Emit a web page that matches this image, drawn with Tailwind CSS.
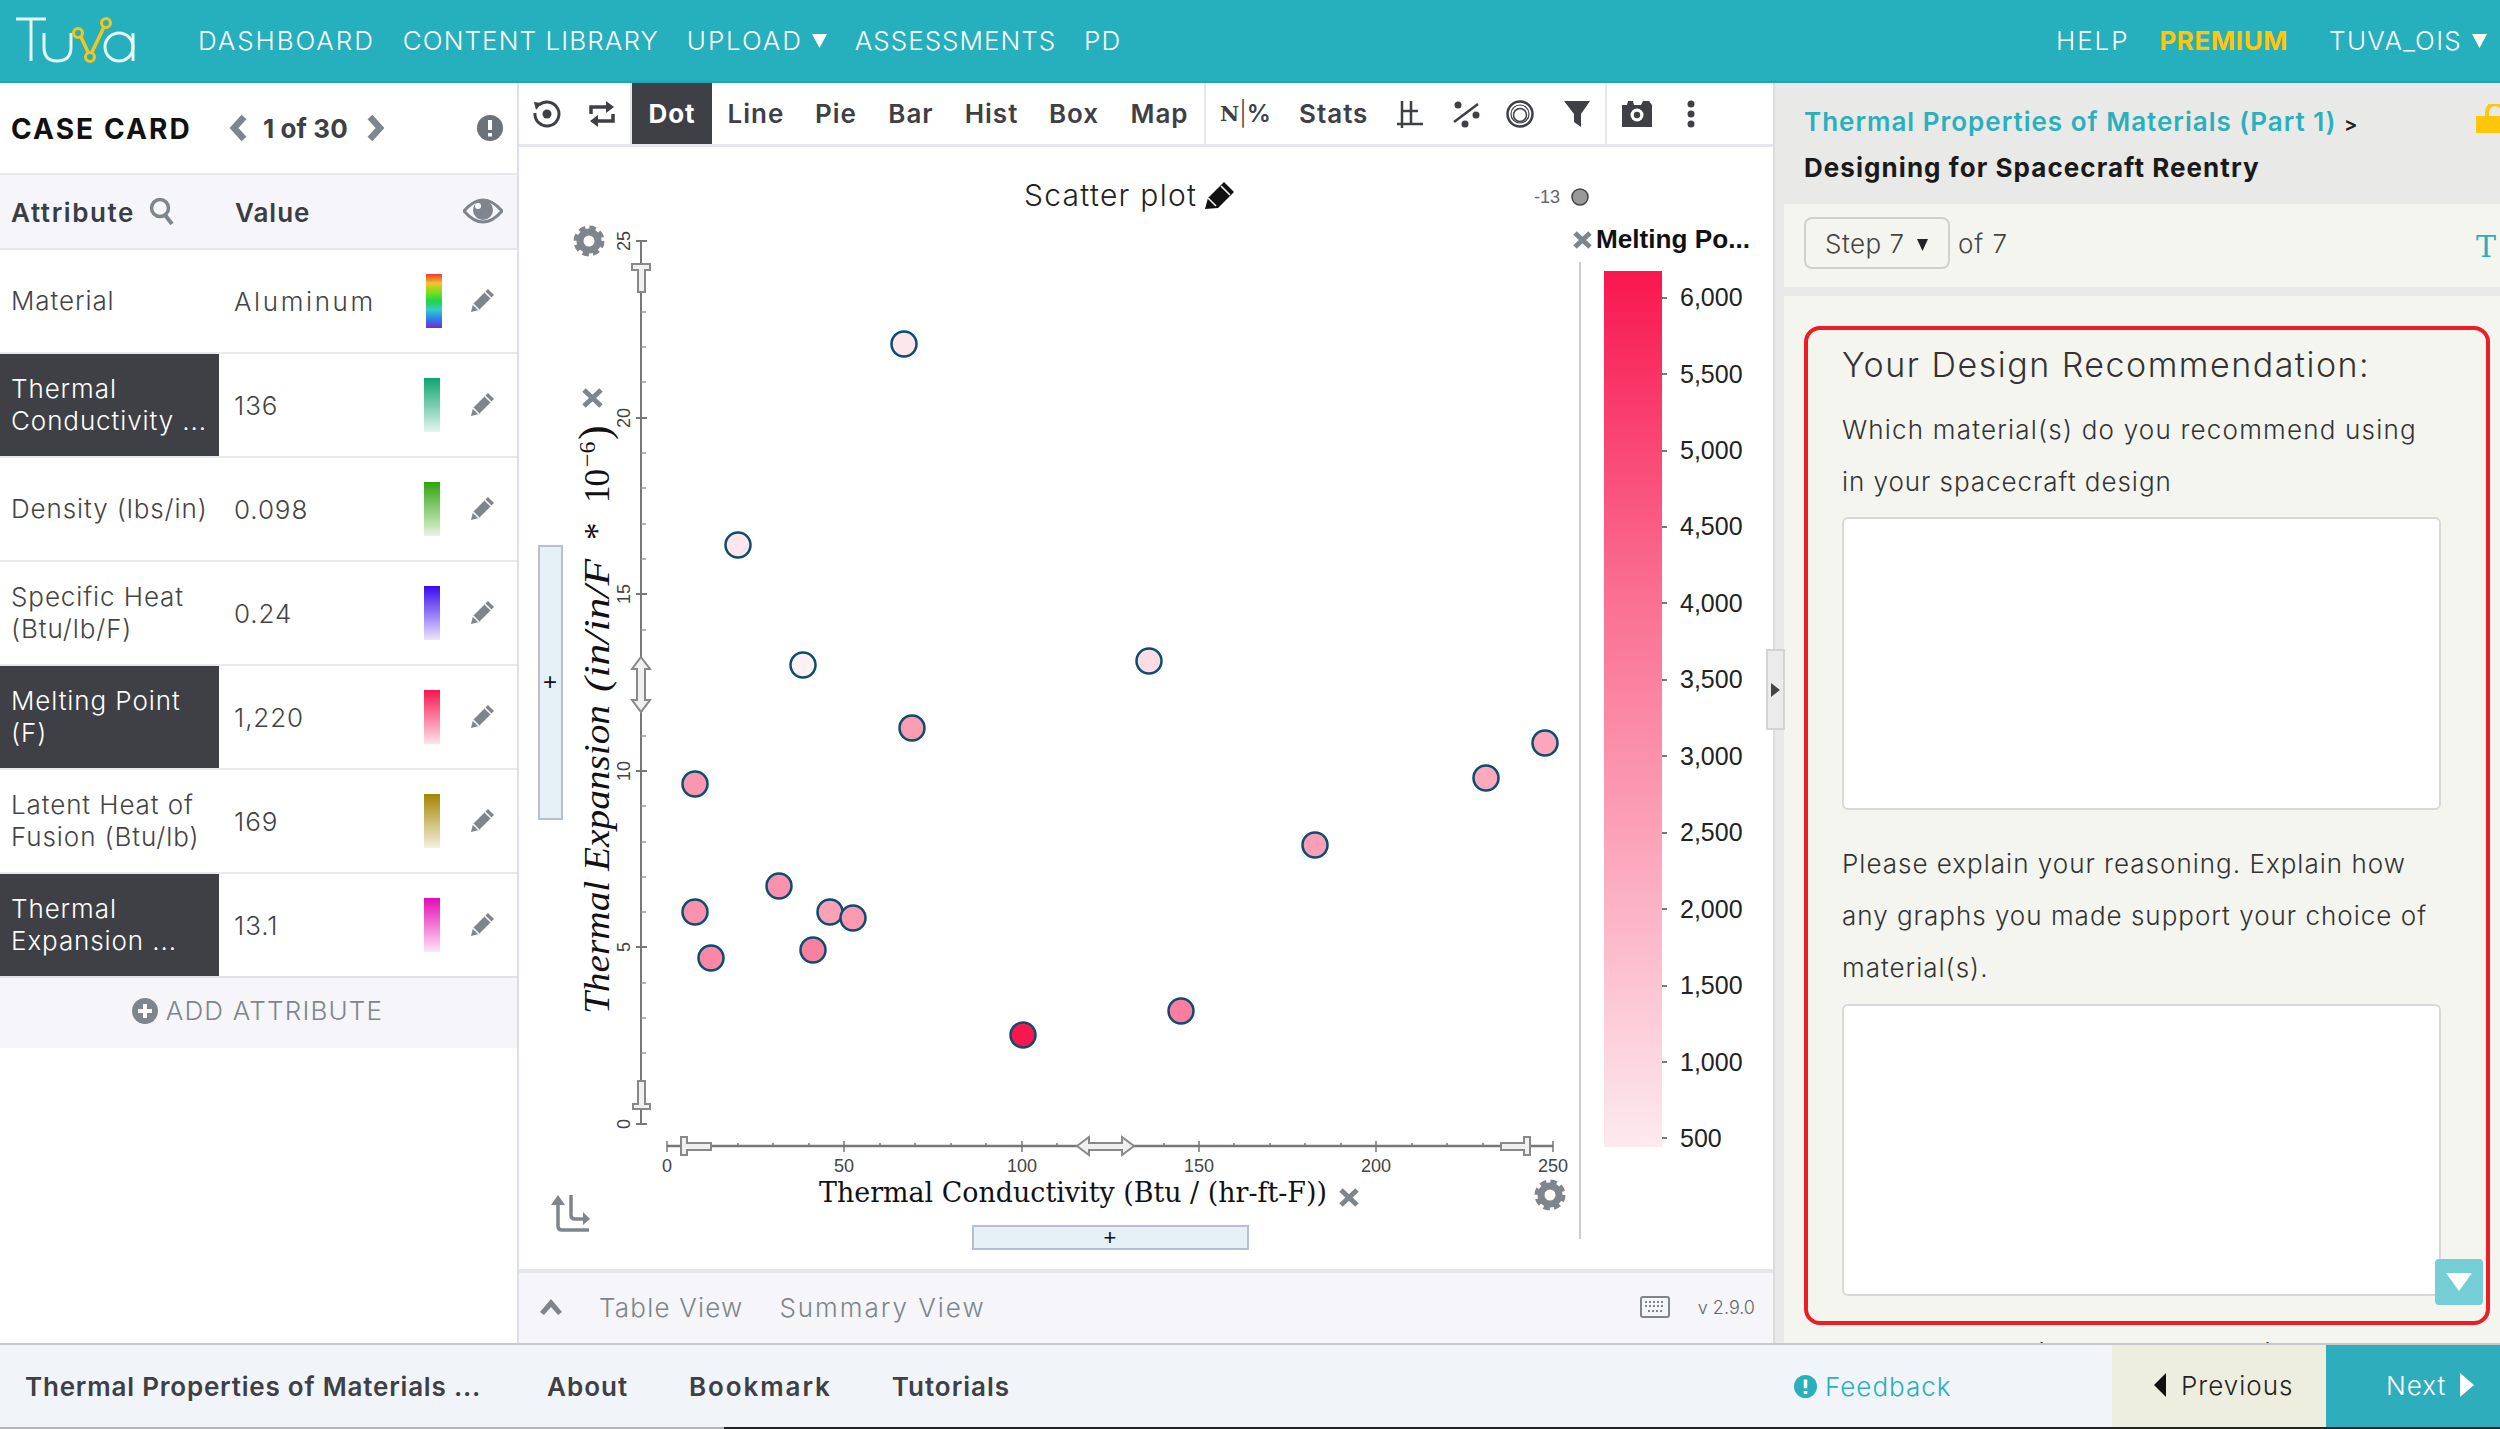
<!doctype html>
<html><head><meta charset="utf-8"><script src="https://cdn.jsdelivr.net/npm/@tailwindcss/browser@4"></script></head>
<body class="m-0 overflow-hidden bg-white">
<div class="relative flex flex-col w-[2500px] h-[1429px] overflow-hidden font-['Inter',sans-serif] font-light text-[#444] text-[26px]">
<!-- top bar -->
<header class="flex items-center h-[83px] shrink-0 bg-[#26afbd] border-b-2 border-[#1fa6b4] text-white text-[26px]">
  <svg width="140" height="81" viewBox="0 0 140 81" class="shrink-0" fill="none"><path d="M16 19H46M31 19V61" stroke="#e6f7f8" stroke-width="3"/><path d="M44 33V47Q44 61 57 61Q71 61 71 47V33" stroke="#e6f7f8" stroke-width="3"/><ellipse cx="119" cy="47" rx="14" ry="14" stroke="#e6f7f8" stroke-width="3"/><path d="M133 33V61" stroke="#e6f7f8" stroke-width="3"/><path d="M81 37L88 52M92 52L104 27" stroke="#f6c51b" stroke-width="3.5"/><circle cx="78" cy="33" r="4.5" stroke="#f6c51b" stroke-width="3"/><circle cx="90" cy="57" r="4.5" stroke="#f6c51b" stroke-width="3"/><circle cx="106" cy="23" r="4.5" stroke="#f6c51b" stroke-width="3"/></svg>
  <nav class="flex items-center ml-[58px] gap-[28px] tracking-[1.1px] whitespace-nowrap">
    <span class="tracking-[1.9px]">DASHBOARD</span><span>CONTENT LIBRARY</span><span class="flex items-center gap-[9px] tracking-[1.9px]">UPLOAD<svg width="15" height="14" viewBox="0 0 15 14"><path d="M0 0H15L7.5 14Z" fill="#fff"/></svg></span><span class="tracking-[1px]">ASSESSMENTS</span><span>PD</span>
  </nav>
  <div class="ml-auto flex items-center mr-[13px] tracking-[1.9px] whitespace-nowrap">
    <span>HELP</span><span class="ml-[30px] font-bold tracking-[0.6px] text-[#ffc60b]">PREMIUM</span><span class="ml-[41px] flex items-center gap-[10px] tracking-[1.3px]">TUVA_OIS<svg width="15" height="14" viewBox="0 0 15 14"><path d="M0 0H15L7.5 14Z" fill="#fff"/></svg></span>
  </div>
</header>
<div class="flex flex-1 min-h-0">
  <!-- left -->
  <aside class="w-[519px] shrink-0 border-r-2 border-[#dcdfe6] flex flex-col tracking-[0.9px]">
    <div class="flex items-center h-[92px] border-b-2 border-[#e6e7ec] pl-[11px] pr-[14px] tracking-normal">
      <span class="text-[28px] font-bold text-[#111] tracking-[2.1px] w-[217px] shrink-0 pt-[2px]">CASE CARD</span>
      <svg width="20" height="28" viewBox="0 0 20 28"><path d="M16 3L6 14L16 25" fill="none" stroke="#7f858c" stroke-width="6.5"/></svg>
      <span class="ml-[15px] text-[26px] font-bold text-[#3e4045] tracking-[0.1px] whitespace-nowrap">1 of 30</span>
      <svg width="20" height="28" viewBox="0 0 20 28" class="ml-[18px]"><path d="M4 3L14 14L4 25" fill="none" stroke="#7f858c" stroke-width="6.5"/></svg>
      <svg width="26" height="26" viewBox="0 0 26 26" class="ml-auto"><circle cx="13" cy="13" r="13" fill="#6c7279"/><path d="M13 5V15M13 18V21.5" stroke="#fff" stroke-width="4"/></svg>
    </div>
    <div class="flex items-center h-[75px] bg-[#f5f5fa] border-b-2 border-[#e6e7ec] pl-[11px] pr-[14px] text-[26px] font-semibold text-[#3a3d42] tracking-[1px]">
      <span class="w-[224px] shrink-0 flex items-center gap-[14px] pt-[2px] tracking-[1.6px]">Attribute<svg width="26" height="28" viewBox="0 0 26 28" class="-mt-[4px]"><circle cx="11" cy="11" r="8.5" fill="none" stroke="#7f858c" stroke-width="3.5"/><path d="M16 18L23 27" stroke="#7f858c" stroke-width="4"/></svg></span>
      <span class="pt-[2px]">Value</span>
      <svg width="40" height="28" viewBox="0 0 40 28" class="ml-auto -mt-[2px]"><path d="M1 14Q20 -8 39 14Q20 36 1 14Z" fill="none" stroke="#7f858c" stroke-width="3"/><circle cx="20" cy="13" r="10" fill="#7f858c"/><circle cx="15" cy="9" r="3" fill="#fff"/></svg>
    </div>
    <div class="flex items-center h-[104px] border-b-2 border-[#eaeaee]"><div class="w-[219px] h-full flex items-center pl-[11px] leading-[32px]">Material</div><div class="pl-[15px] flex-1 tracking-[2.6px]">Aluminum</div><div class="w-[16px] h-[54px] mr-[28px] bg-[linear-gradient(to_bottom,#f0392e,#f5c02a,#7ce01f,#1fd44a,#39c9c9,#2a7ff0,#7a28d0)]"></div><svg width="26" height="26" viewBox="0 0 26 26" class="mr-[21px] -mt-[3px]"><path d="M1 25L3 17L18 2L24 8L9 23Z" fill="#7f858c"/><path d="M3 17L9 23M15 5L21 11" stroke="#fff" stroke-width="1.5"/></svg></div>
    <div class="flex items-center h-[104px] border-b-2 border-[#eaeaee]"><div class="w-[219px] h-full flex items-center pl-[11px] leading-[32px] bg-[#3e4045] text-white whitespace-nowrap"><span>Thermal<br>Conductivity ...</span></div><div class="pl-[15px] flex-1">136</div><div class="w-[16px] h-[54px] mr-[30px] bg-[linear-gradient(to_bottom,#0aa56f,#e4f6ef)]"></div><svg width="26" height="26" viewBox="0 0 26 26" class="mr-[21px] -mt-[3px]"><path d="M1 25L3 17L18 2L24 8L9 23Z" fill="#7f858c"/><path d="M3 17L9 23M15 5L21 11" stroke="#fff" stroke-width="1.5"/></svg></div>
    <div class="flex items-center h-[104px] border-b-2 border-[#eaeaee]"><div class="w-[219px] h-full flex items-center pl-[11px] leading-[32px] whitespace-nowrap">Density (lbs/in)</div><div class="pl-[15px] flex-1">0.098</div><div class="w-[16px] h-[54px] mr-[30px] bg-[linear-gradient(to_bottom,#2ea50a,#e6f5e0)]"></div><svg width="26" height="26" viewBox="0 0 26 26" class="mr-[21px] -mt-[3px]"><path d="M1 25L3 17L18 2L24 8L9 23Z" fill="#7f858c"/><path d="M3 17L9 23M15 5L21 11" stroke="#fff" stroke-width="1.5"/></svg></div>
    <div class="flex items-center h-[104px] border-b-2 border-[#eaeaee]"><div class="w-[219px] h-full flex items-center pl-[11px] leading-[32px] whitespace-nowrap"><span>Specific Heat<br>(Btu/lb/F)</span></div><div class="pl-[15px] flex-1">0.24</div><div class="w-[16px] h-[54px] mr-[30px] bg-[linear-gradient(to_bottom,#3a0af0,#ebe5fd)]"></div><svg width="26" height="26" viewBox="0 0 26 26" class="mr-[21px] -mt-[3px]"><path d="M1 25L3 17L18 2L24 8L9 23Z" fill="#7f858c"/><path d="M3 17L9 23M15 5L21 11" stroke="#fff" stroke-width="1.5"/></svg></div>
    <div class="flex items-center h-[104px] border-b-2 border-[#eaeaee]"><div class="w-[219px] h-full flex items-center pl-[11px] leading-[32px] bg-[#3e4045] text-white whitespace-nowrap"><span>Melting Point<br>(F)</span></div><div class="pl-[15px] flex-1">1,220</div><div class="w-[16px] h-[54px] mr-[30px] bg-[linear-gradient(to_bottom,#f9164f,#fde3ea)]"></div><svg width="26" height="26" viewBox="0 0 26 26" class="mr-[21px] -mt-[3px]"><path d="M1 25L3 17L18 2L24 8L9 23Z" fill="#7f858c"/><path d="M3 17L9 23M15 5L21 11" stroke="#fff" stroke-width="1.5"/></svg></div>
    <div class="flex items-center h-[104px] border-b-2 border-[#eaeaee]"><div class="w-[219px] h-full flex items-center pl-[11px] leading-[32px] whitespace-nowrap"><span>Latent Heat of<br>Fusion (Btu/lb)</span></div><div class="pl-[15px] flex-1">169</div><div class="w-[16px] h-[54px] mr-[30px] bg-[linear-gradient(to_bottom,#a38600,#f5f1de)]"></div><svg width="26" height="26" viewBox="0 0 26 26" class="mr-[21px] -mt-[3px]"><path d="M1 25L3 17L18 2L24 8L9 23Z" fill="#7f858c"/><path d="M3 17L9 23M15 5L21 11" stroke="#fff" stroke-width="1.5"/></svg></div>
    <div class="flex items-center h-[104px] border-b-2 border-[#e2e4e9]"><div class="w-[219px] h-full flex items-center pl-[11px] leading-[32px] bg-[#3e4045] text-white whitespace-nowrap"><span>Thermal<br>Expansion ...</span></div><div class="pl-[15px] flex-1">13.1</div><div class="w-[16px] h-[54px] mr-[30px] bg-[linear-gradient(to_bottom,#e60ab4,#fde5f6)]"></div><svg width="26" height="26" viewBox="0 0 26 26" class="mr-[21px] -mt-[3px]"><path d="M1 25L3 17L18 2L24 8L9 23Z" fill="#7f858c"/><path d="M3 17L9 23M15 5L21 11" stroke="#fff" stroke-width="1.5"/></svg></div>
    <div class="flex items-center justify-center gap-[8px] h-[70px] bg-[#f5f5fa] text-[#7f858c] text-[26px] tracking-[1.2px] pb-[5px] pr-[2px]">
      <svg width="26" height="26" viewBox="0 0 26 26"><circle cx="13" cy="13" r="13" fill="#7f858c"/><path d="M13 6V20M6 13H20" stroke="#fff" stroke-width="4"/></svg><span>ADD ATTRIBUTE</span>
    </div>
  </aside>
  <!-- center -->
  <main class="w-[1254px] shrink-0 flex flex-col">
    <div class="flex items-stretch h-[64px] border-b-[3px] border-[#e6e7ec] text-[26px] font-semibold text-[#3e4045] tracking-[1px] shrink-0">
      <div class="flex items-center w-[113px] pl-[14px] gap-[28px] border-r-2 border-[#e6e7ec]">
        <svg width="28" height="28" viewBox="0 0 28 28" fill="none"><path d="M6 5A12 12 0 1 1 2 13" stroke="#3e4045" stroke-width="3"/><path d="M1 2L9 3L3 10Z" fill="#3e4045"/><circle cx="14" cy="14" r="4.5" fill="#3e4045"/></svg>
        <svg width="26" height="26" viewBox="0 0 26 26" fill="none"><path d="M2 13V6H19" stroke="#3e4045" stroke-width="3.5"/><path d="M17 0L25 6L17 12Z" fill="#3e4045"/><path d="M24 13V20H7" stroke="#3e4045" stroke-width="3.5"/><path d="M9 14L1 20L9 26Z" fill="#3e4045"/></svg>
      </div>
      <div class="flex items-center justify-center w-[80px] bg-[#3e4045] text-white font-bold">Dot</div>
      <span class="flex items-center justify-center w-[88px]">Line</span><span class="flex items-center justify-center w-[72px]">Pie</span><span class="flex items-center justify-center w-[78px]">Bar</span><span class="flex items-center justify-center w-[83px]">Hist</span><span class="flex items-center justify-center w-[82px]">Box</span><span class="flex items-center justify-center w-[89px]">Map</span>
      <div class="flex items-center w-[403px] pl-[14px] border-x-2 border-[#e6e7ec]">
        <span class="flex items-center w-[50px] justify-between tracking-normal"><span class="font-['DejaVu_Serif',serif] font-bold text-[21px]">N</span><span class="font-light text-[24px]">|</span><span class="text-[24px]">%</span></span>
        <span class="ml-[29px]">Stats</span>
        <svg width="28" height="30" viewBox="0 0 28 30" fill="none" stroke="#3e4045" stroke-width="2.5" class="ml-[28px]"><path d="M1 25H27M6 2V29M15 2V25M6 12H22"/></svg>
        <svg width="28" height="28" viewBox="0 0 28 28" fill="#3e4045" class="ml-[28px]"><path d="M2 22L26 4" stroke="#3e4045" stroke-width="2.5"/><circle cx="6" cy="5" r="3.5"/><circle cx="24" cy="15" r="3.5"/><circle cx="13" cy="24" r="3.5"/></svg>
        <svg width="28" height="28" viewBox="0 0 28 28" fill="none" stroke="#3e4045" class="ml-[26px]"><circle cx="14" cy="14" r="12.5" stroke-width="2.5"/><circle cx="14" cy="15" r="6.5" stroke-width="1.5"/><circle cx="14" cy="14" r="9" stroke-width="1.2"/></svg>
        <svg width="26" height="28" viewBox="0 0 26 28" fill="#3e4045" class="ml-[30px]"><path d="M0 1H26L17 14V27L10 22V14Z"/></svg>
      </div>
      <div class="flex items-center">
        <svg width="32" height="28" viewBox="0 0 32 28" class="ml-[14px]"><path d="M1 5H6L7 1H12L13 5H20L22 1H28L31 5V27H1Z" fill="#3e4045"/><circle cx="16" cy="15" r="6.5" fill="#fff"/><circle cx="16" cy="15" r="3.2" fill="#3e4045"/></svg>
        <svg width="8" height="28" viewBox="0 0 8 28" class="ml-[34px]" fill="#3e4045"><circle cx="4" cy="4" r="3.5"/><circle cx="4" cy="14" r="3.5"/><circle cx="4" cy="24" r="3.5"/></svg>
      </div>
    </div>
    <div class="relative flex-1 min-h-0">
      <svg class="absolute inset-0" width="1254" height="1122" viewBox="519 147 1254 1122" font-family="'Liberation Sans',sans-serif">
        <defs>
          <g id="gear"><circle r="12.5" fill="none" stroke="#7f858c" stroke-width="6" stroke-dasharray="6 3.82"/><circle r="9" fill="none" stroke="#7f858c" stroke-width="7"/></g>
          <linearGradient id="cb" x1="0" y1="0" x2="0" y2="1"><stop offset="0" stop-color="#f8174f"/><stop offset="0.37" stop-color="#fa6f92"/><stop offset="0.62" stop-color="#fb9db5"/><stop offset="1" stop-color="#fdeaef"/></linearGradient>
        </defs>
        <!-- title -->
        <text x="1024" y="206" font-family="Inter,sans-serif" font-weight="300" font-size="30" fill="#222" textLength="172" lengthAdjust="spacing">Scatter plot</text>
        <path d="M1205 209L1208 198L1224 182L1234 192L1218 208Z" fill="#111"/><path d="M1221 186L1230 195M1208 198L1216 206" stroke="#fff" stroke-width="1.5"/>
        <!-- legend -->
        <text x="1534" y="203" font-size="18" fill="#666">-13</text>
        <circle cx="1580" cy="197" r="8" fill="#999" stroke="#444" stroke-width="1.5"/>
        <path d="M1575 233L1590 247M1590 233L1575 247" stroke="#7f858c" stroke-width="5"/>
        <text x="1596" y="248" font-size="26" font-weight="700" fill="#111" textLength="154" lengthAdjust="spacingAndGlyphs">Melting Po...</text>
        <path d="M1580 262V1239" stroke="#ccc" stroke-width="2"/>
        <rect x="1604" y="271" width="58" height="876" fill="url(#cb)"/>
        <g font-size="25" fill="#222">
          <text x="1680" y="306">6,000</text><text x="1680" y="383">5,500</text><text x="1680" y="459">5,000</text><text x="1680" y="535">4,500</text><text x="1680" y="612">4,000</text><text x="1680" y="688">3,500</text><text x="1680" y="765">3,000</text><text x="1680" y="841">2,500</text><text x="1680" y="918">2,000</text><text x="1680" y="994">1,500</text><text x="1680" y="1071">1,000</text><text x="1680" y="1147">500</text>
        </g>
        <path d="M1662 298h5M1662 374h5M1662 451h5M1662 527h5M1662 603h5M1662 680h5M1662 756h5M1662 833h5M1662 909h5M1662 986h5M1662 1062h5M1662 1138h5" stroke="#777" stroke-width="2"/>
        <!-- y axis -->
        <path d="M641 241V1124" stroke="#777" stroke-width="2"/>
        <path d="M636 241H647M636 418H647M636 594H647M636 771H647M636 947H647M636 1124H647" stroke="#777" stroke-width="2"/>
        <path d="M641 276h5M641 312h5M641 347h5M641 382h5M641 453h5M641 488h5M641 524h5M641 559h5M641 630h5M641 665h5M641 700h5M641 736h5M641 806h5M641 842h5M641 877h5M641 912h5M641 983h5M641 1018h5M641 1053h5M641 1089h5" stroke="#999" stroke-width="1.5"/>
        <g font-size="18" fill="#444" text-anchor="middle">
          <text transform="translate(630,241) rotate(-90)">25</text><text transform="translate(630,418) rotate(-90)">20</text><text transform="translate(630,594) rotate(-90)">15</text><text transform="translate(630,771) rotate(-90)">10</text><text transform="translate(630,947) rotate(-90)">5</text><text transform="translate(630,1124) rotate(-90)">0</text>
        </g>
        <path d="M632 264H650V270H645V292H638V270H632Z" fill="#f0f0f0" stroke="#888" stroke-width="2"/>
        <path d="M641 657L650 669H645V700H650L641 712L632 700H637V669H632Z" fill="#f0f0f0" stroke="#888" stroke-width="2"/>
        <path d="M638 1081H645V1104H650V1109H633V1104H638Z" fill="#f0f0f0" stroke="#888" stroke-width="2"/>
        <!-- y label -->
        <g transform="translate(609,0) rotate(-90)" font-family="'Liberation Serif',serif" font-size="35" fill="#111">
          <text x="-1014" y="0" font-style="italic" textLength="309" lengthAdjust="spacingAndGlyphs">Thermal Expansion</text>
          <text x="-692" y="0" font-style="italic" textLength="133" lengthAdjust="spacingAndGlyphs">(in/in/F</text>
          <text x="-540" y="0">*</text>
          <text x="-503" y="0" textLength="34" lengthAdjust="spacing">10</text>
          <text x="-467" y="-14" font-size="24">−6</text>
          <text x="-440" y="0" font-size="44">)</text>
        </g>
        <path d="M584 390L601 406M601 390L584 406" stroke="#7f858c" stroke-width="5"/>
        <use href="#gear" x="589" y="241"/>
        <rect x="539" y="546" width="23" height="273" fill="#e6f0f7" stroke="#b5c0d4" stroke-width="2"/>
        <text x="550" y="690" font-size="24" fill="#111" text-anchor="middle">+</text>
        <!-- x axis -->
        <path d="M667 1146H1553" stroke="#777" stroke-width="2.5"/>
        <path d="M667 1141V1152M844 1141V1152M1022 1141V1152M1199 1141V1152M1376 1141V1152M1553 1141V1152" stroke="#777" stroke-width="1.5"/>
        <path d="M702 1143v3M738 1143v3M773 1143v3M809 1143v3M880 1143v3M915 1143v3M951 1143v3M986 1143v3M1057 1143v3M1093 1143v3M1128 1143v3M1164 1143v3M1234 1143v3M1270 1143v3M1305 1143v3M1341 1143v3M1412 1143v3M1447 1143v3M1483 1143v3M1518 1143v3" stroke="#777" stroke-width="1.5"/>
        <g font-size="18" fill="#444" text-anchor="middle">
          <text x="667" y="1172">0</text><text x="844" y="1172">50</text><text x="1022" y="1172">100</text><text x="1199" y="1172">150</text><text x="1376" y="1172">200</text><text x="1553" y="1172">250</text>
        </g>
        <path d="M681 1137H687V1143H711V1150H687V1155H681Z" fill="#f0f0f0" stroke="#888" stroke-width="2"/>
        <path d="M1530 1137H1524V1143H1501V1150H1524V1155H1530Z" fill="#f0f0f0" stroke="#888" stroke-width="2"/>
        <path d="M1077 1146L1089 1137V1143H1122V1137L1134 1146L1122 1155V1150H1089V1155Z" fill="#f0f0f0" stroke="#888" stroke-width="2"/>
        <text x="819" y="1202" font-family="'DejaVu Serif',serif" font-size="27" fill="#111" textLength="508" lengthAdjust="spacingAndGlyphs">Thermal Conductivity (Btu / (hr-ft-F))</text>
        <path d="M1341 1190L1357 1205M1357 1190L1341 1205" stroke="#7f858c" stroke-width="5"/>
        <use href="#gear" x="1550" y="1195"/>
        <rect x="973" y="1226" width="275" height="23" fill="#e6f0f7" stroke="#b5c0d4" stroke-width="2"/>
        <text x="1110" y="1245" font-size="22" fill="#111" text-anchor="middle">+</text>
        <path d="M558 1200V1226Q558 1230 562 1230H589" fill="none" stroke="#7f858c" stroke-width="3.5"/><path d="M551 1205L558 1195L565 1205Z" fill="#7f858c"/>
        <path d="M571 1195V1215Q571 1219 575 1219H584" fill="none" stroke="#7f858c" stroke-width="3.5"/><path d="M583 1212L590 1219L583 1225Z" fill="#7f858c"/>
        <!-- points -->
        <g stroke="#0d4c6e" stroke-width="2.5">
          <circle cx="904" cy="344" r="12.5" fill="#fde6ec"/><circle cx="738" cy="545" r="12.5" fill="#fde6ec"/><circle cx="803" cy="665" r="12.5" fill="#fef0f3"/><circle cx="1149" cy="661" r="12.5" fill="#fcdde5"/><circle cx="912" cy="728" r="12.5" fill="#fb9db5"/><circle cx="1545" cy="743" r="12.5" fill="#fba6bc"/><circle cx="695" cy="784" r="12.5" fill="#fb96b0"/><circle cx="1486" cy="778" r="12.5" fill="#fca8bd"/><circle cx="1315" cy="845" r="12.5" fill="#fb9fb6"/><circle cx="779" cy="886" r="12.5" fill="#fb92ad"/><circle cx="695" cy="912" r="12.5" fill="#fb92ad"/><circle cx="830" cy="912" r="12.5" fill="#fba2b9"/><circle cx="853" cy="918" r="12.5" fill="#fb98b2"/><circle cx="711" cy="958" r="12.5" fill="#fa87a6"/><circle cx="813" cy="950" r="12.5" fill="#fa80a0"/><circle cx="1181" cy="1011" r="12.5" fill="#fa7e9f"/><circle cx="1023" cy="1035" r="12.5" fill="#f8174f"/>
        </g>
      </svg>
    </div>
    <div class="flex items-center h-[74px] border-t-[4px] border-[#e4e6ea] bg-[#f5f5fa] text-[26px] text-[#7f858c] shrink-0 pl-[20px] pb-[2px] tracking-[1.2px]">
      <svg width="24" height="18" viewBox="0 0 24 18"><path d="M12 1L23 14L19 17L12 9L5 17L1 14Z" fill="#7f858c"/></svg>
      <span class="ml-[36px]">Table View</span><span class="ml-[36px] tracking-[2px]">Summary View</span>
      <svg width="30" height="22" viewBox="0 0 30 22" class="ml-auto" fill="none" stroke="#7f858c" stroke-width="2"><rect x="1" y="1" width="28" height="20" rx="2"/><path d="M5 6H25M5 10H25M8 15H22" stroke-dasharray="2 2"/></svg>
      <span class="ml-[28px] mr-[18px] text-[18px] text-[#666] tracking-normal">v 2.9.0</span>
    </div>
  </main>
  <!-- right -->
  <section class="relative flex-1 bg-[#e9e9e7] border-l-[2px] border-[#dcdcda] flex flex-col overflow-hidden tracking-[0.95px]">
    <div class="h-[121px] pl-[29px] pt-[16px] shrink-0 relative">
      <div class="h-[46px] font-semibold text-[26px] leading-[46px] text-[#2aafbc] whitespace-nowrap tracking-[1px]">Thermal Properties of Materials (Part 1) <span class="text-[#222] text-[20px]">&gt;</span></div>
      <div class="h-[46px] font-bold text-[26px] leading-[46px] text-[#1a1a1a] whitespace-nowrap tracking-[1.05px]">Designing for Spacecraft Reentry</div>
      <svg width="32" height="30" viewBox="0 0 32 30" class="absolute left-[701px] top-[21px]"><path d="M11 14V8A8 8 0 0 1 27 8V14" fill="none" stroke="#ffc60b" stroke-width="4"/><rect x="0" y="12" width="32" height="17" fill="#ffc60b"/></svg>
    </div>
    <div class="relative flex items-center h-[83px] ml-[9px] bg-[#f5f5f0] shrink-0 pl-[20px] pb-[5px] text-[26px] text-[#444]">
      <span class="flex items-center h-[52px] w-[146px] pl-[19px] border-2 border-[#d0d0cc] rounded-[8px] whitespace-nowrap tracking-[0.5px]">Step 7<svg width="11" height="12" viewBox="0 0 11 12" class="ml-[12px] mt-[4px]"><path d="M0 0H11L5.5 12Z" fill="#222"/></svg></span><span class="ml-[8px]">of 7</span>
      <span class="absolute left-[692px] top-[20px] font-['DejaVu_Serif',serif] text-[30px] text-[#2aafbc]">T</span>
    </div>
    <div class="mt-[9px] flex-1 ml-[9px] bg-[#f5f5f0] pl-[20px] pt-[30px] min-h-0 overflow-hidden">
      <div class="w-[686px] h-[999px] border-[4px] border-[#ee1c25] rounded-[16px] pl-[34px] pt-[9px] text-[26px] leading-[52px] text-[#333]">
        <div class="text-[34px] tracking-[1.5px] whitespace-nowrap">Your Design Recommendation:</div>
        <p class="mt-[13px] whitespace-nowrap tracking-[1.2px]">Which material(s) do you recommend using<br><span class="tracking-[0.95px]">in your spacecraft design</span></p>
        <div class="mt-[9px] h-[293px] w-[599px] bg-white border-2 border-[#d8d8d8] rounded-[6px]"></div>
        <p class="mt-[28px] whitespace-nowrap tracking-[1px]">Please explain your reasoning. Explain how<br>any graphs you made support your choice of<br>material(s).</p>
        <div class="mt-[10px] h-[292px] w-[599px] bg-white border-2 border-[#d8d8d8] rounded-[6px]"></div>
      </div>
      <p class="mt-[2px] pl-[37px] leading-[52px] whitespace-nowrap text-[#333]">What other design recommendations would you</p>
    </div>
    <div class="absolute left-[660px] top-[1176px] w-[48px] h-[46px] bg-[#75ced6] rounded-[4px] flex items-center justify-center"><svg width="26" height="18" viewBox="0 0 26 18"><path d="M0 0H26L13 18Z" fill="#fff"/></svg></div>
  </section>
  <div class="absolute left-[1766px] top-[649px] w-[19px] h-[81px] bg-[#ebebeb] border-2 border-[#d4d4d4] flex items-center justify-center"><svg width="9" height="14" viewBox="0 0 9 14"><path d="M0 0L9 7L0 14Z" fill="#444"/></svg></div>
</div>
<footer class="relative flex items-stretch h-[86px] shrink-0 bg-[#f1f4f9] border-t-2 border-[#c8c9ca] border-b-2 border-b-[#222] text-[26px] tracking-[1px] whitespace-nowrap">
  <span class="w-[547px] flex items-center pl-[25px] font-semibold text-[#3e4045] tracking-[0.8px]">Thermal Properties of Materials ...</span>
  <span class="flex items-center font-semibold text-[#3e4045]">About</span>
  <span class="flex items-center ml-[61px] font-semibold text-[#3e4045] tracking-[1.9px]">Bookmark</span>
  <span class="flex items-center ml-[60px] font-semibold text-[#3e4045]">Tutorials</span>
  <span class="ml-auto flex items-center gap-[8px] w-[318px] text-[#2aafbc] font-light"><svg width="23" height="23" viewBox="0 0 26 26"><circle cx="13" cy="13" r="13" fill="#2aafbc"/><path d="M13 5V15M13 18V21.5" stroke="#fff" stroke-width="4"/></svg>Feedback</span>
  <span class="flex items-center w-[214px] bg-[#eeeee0] pl-[42px] pb-[2px] gap-[15px] text-[#222]"><svg width="12" height="24" viewBox="0 0 12 24"><path d="M12 0V24L0 12Z" fill="#111"/></svg>Previous</span>
  <span class="flex items-center w-[174px] bg-[#2eadbc] pl-[60px] pb-[2px] gap-[14px] text-white"><span>Next</span><svg width="14" height="24" viewBox="0 0 14 24"><path d="M0 0V24L14 12Z" fill="#fff"/></svg></span>
  <div class="absolute left-0 -bottom-[2px] w-[724px] h-[2px] bg-[#b5b5b5]"></div>
</footer>
</div>
</body></html>
